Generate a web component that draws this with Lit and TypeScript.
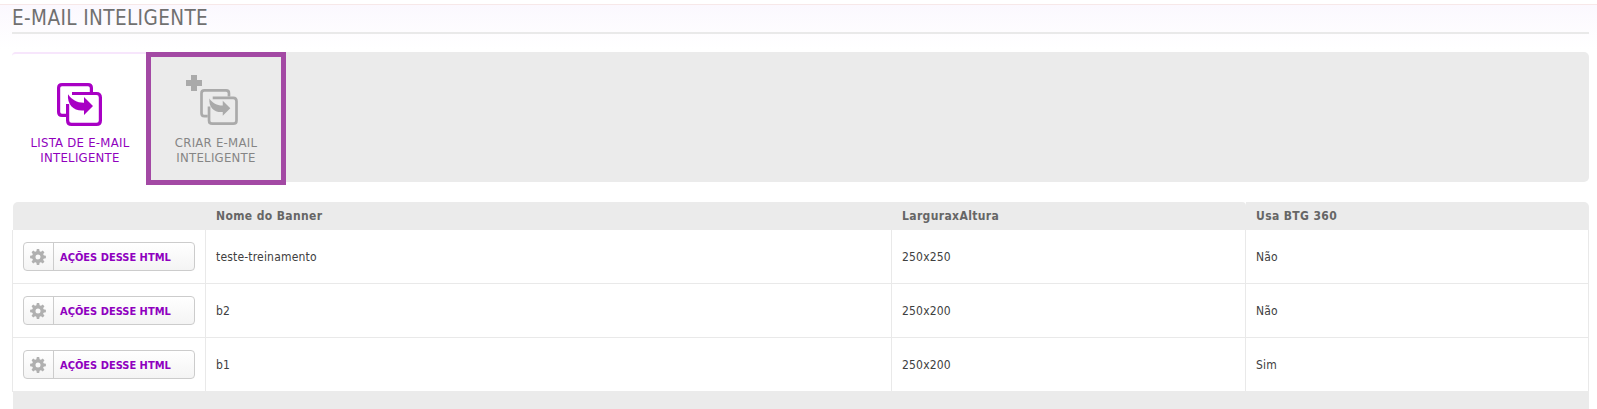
import { LitElement, html, svg, css } from "lit";
import { customElement, property } from "lit/decorators.js";

const font = css`"DejaVu Sans Condensed", "DejaVu Sans", sans-serif`;

@customElement("forward-icon")
class ForwardIcon extends LitElement {
  static styles = css`
    :host { display: block; line-height: 0; }
    svg { width: 100%; height: 100%; overflow: visible; }
  `;
  render() {
    return html`<svg viewBox="0 0 45 43">
      <g fill="none" stroke="currentColor" stroke-width="3.200">
        <path d="M34.400 9V5Q34.400 1.600 31 1.600H5Q1.600 1.600 1.600 5V29Q1.600 32.400 5 32.400H9" />
        <path d="M15 10.500H39.500Q43.400 10.500 43.400 14.500V37.500Q43.400 41.400 39.500 41.400H14.500Q10.600 41.400 10.600 37.500V21" />
      </g>
      <path fill="currentColor" d="M11 11.300C15 17 20 19.800 27 19.700V14L36 23L27 32V27.500C17 28.500 10 22 11 11.300Z" />
    </svg>`;
  }
}

@customElement("action-button")
class ActionButton extends LitElement {
  static styles = css`
    :host { display: block; }
    button {
      display: flex; align-items: stretch; width: 172px; height: 29px; padding: 0; margin: 0;
      box-sizing: border-box; border: 1px solid #ccc; border-radius: 4px;
      background: linear-gradient(#fff, #f4f4f4); font: bold 11px/29px ${font};
      font-stretch: condensed; color: #8f00bf; text-align: left;
    }
    .gear { width: 29px; border-right: 1px solid #ccc; display: flex; align-items: center; justify-content: center; color: #b0b0b0; }
    .gear svg { width: 16px; height: 16px; margin-right: 1px; }
    .label { padding-left: 6px; white-space: nowrap; letter-spacing: 0; }
  `;
  render() {
    return html`<button>
      <span class="gear"><svg viewBox="-8 -8 16 16">
        <circle r="4.200" fill="none" stroke="currentColor" stroke-width="3.400" />
        ${[0, 45, 90, 135, 180, 225, 270, 315].map((a) => svg`<path d="M-1.700 -5H1.700L1.200 -7.900H-1.200Z" fill="currentColor" transform="rotate(${a})" />`)}
      </svg></span>
      <span class="label">AÇÕES DESSE HTML</span>
    </button>`;
  }
}

@customElement("app-root")
class AppRoot extends LitElement {
  @property({ attribute: false }) rows = [
    ["teste-treinamento", "250x250", "Não"],
    ["b2", "250x200", "Não"],
    ["b1", "250x200", "Sim"],
  ];
  static styles = css`
    :host {
      display: block; height: 409px; overflow: hidden; background: #fff;
      font: 12px/15px ${font}; font-stretch: condensed; color: #404040;
    }
    .top { margin-top: 4px; border-top: 1px solid #f7e8e8; height: 47px; padding: 0 8px 0 12px; background: linear-gradient(#fbf8fe, #fff 44px); }
    h1 { margin: 0; height: 27px; border-bottom: 2px solid #e9e9e9; font-weight: 400; font-size: 20.5px; line-height: 27px; color: #707070; letter-spacing: 0.4px; }
    .tabs { display: flex; margin: 0 8px 0 12px; height: 130px; background: #ebebeb; border-radius: 5px; }
    .tab { box-sizing: border-box; display: flex; flex-direction: column; align-items: center; font-size: 13px; line-height: 15px; text-align: center; letter-spacing: 0.26px; }
    .active { width: 134px; border-top: 2px solid #f7e6fc; border-radius: 4px 0 0 4px; background: #fff; color: #9000bd; padding-top: 29px; }
    .active forward-icon { width: 45px; height: 43px; color: #a800c4; }
    .active .name { margin-top: 9px; padding-left: 2px; }
    .create { width: 140px; height: 133px; border: 5px solid #a349a4; background: #ebebeb; color: #858585; padding-top: 18px; }
    .mark { display: grid; grid-template-columns: 14px 38px; grid-template-rows: 14px 36px; width: 52px; height: 50px; margin-right: 8px; color: #aaa; }
    .mark forward-icon { grid-area: 2 / 2; width: 38px; height: 36px; }
    .plus { width: 16px; height: 16px; }
    .create .name { margin-top: 10px; }
    .name span { display: block; white-space: nowrap; }
    .table { margin: 20px 8px 0 12px; }
    .row { display: grid; grid-template-columns: 194px 686px 354px 343px; }
    .head { height: 28px; font-weight: 700; line-height: 28px; color: #666; letter-spacing: 0.37px; }
    .head div { background: #ebebeb; padding-left: 10px; }
    .head div:first-child { border-top-left-radius: 5px; margin-left: 1px; }
    .head div:nth-child(3) { border-top-right-radius: 4px; }
    .head div:last-child { border-top-right-radius: 5px; }
    .body { box-sizing: border-box; height: 54px; border-bottom: 1px solid #e9e9e9; border-left: 1px solid #e9e9e9; grid-template-columns: 193px 686px 354px 343px; line-height: 55px; letter-spacing: 0.18px; }
    .body > div { box-sizing: border-box; height: 53px; border-right: 1px solid #e9e9e9; padding-left: 10px; }
    .body > div:first-child { padding-top: 12px; }
    .foot { height: 18px; margin-left: 1px; margin-top: -1px; background: #ebebeb; }
  `;
  render() {
    return html`
      <header class="top"><h1>E-MAIL INTELIGENTE</h1></header>
      <nav class="tabs">
        <div class="tab active"><forward-icon></forward-icon><div class="name"><span>LISTA DE E-MAIL</span><span>INTELIGENTE</span></div></div>
        <div class="tab create">
          <div class="mark"><svg class="plus" viewBox="0 0 16 16"><path fill="currentColor" d="M5 0h6v5h5v6h-5v5H5v-5H0V5h5z" /></svg><forward-icon></forward-icon></div>
          <div class="name"><span>CRIAR E-MAIL</span><span>INTELIGENTE</span></div>
        </div>
      </nav>
      <section class="table">
        <div class="row head"><div></div><div>Nome do Banner</div><div>LarguraxAltura</div><div>Usa BTG 360</div></div>
        ${this.rows.map((r) => html`<div class="row body"><div><action-button></action-button></div>${r.map((c) => html`<div>${c}</div>`)}</div>`)}
        <div class="foot"></div>
      </section>`;
  }
}
